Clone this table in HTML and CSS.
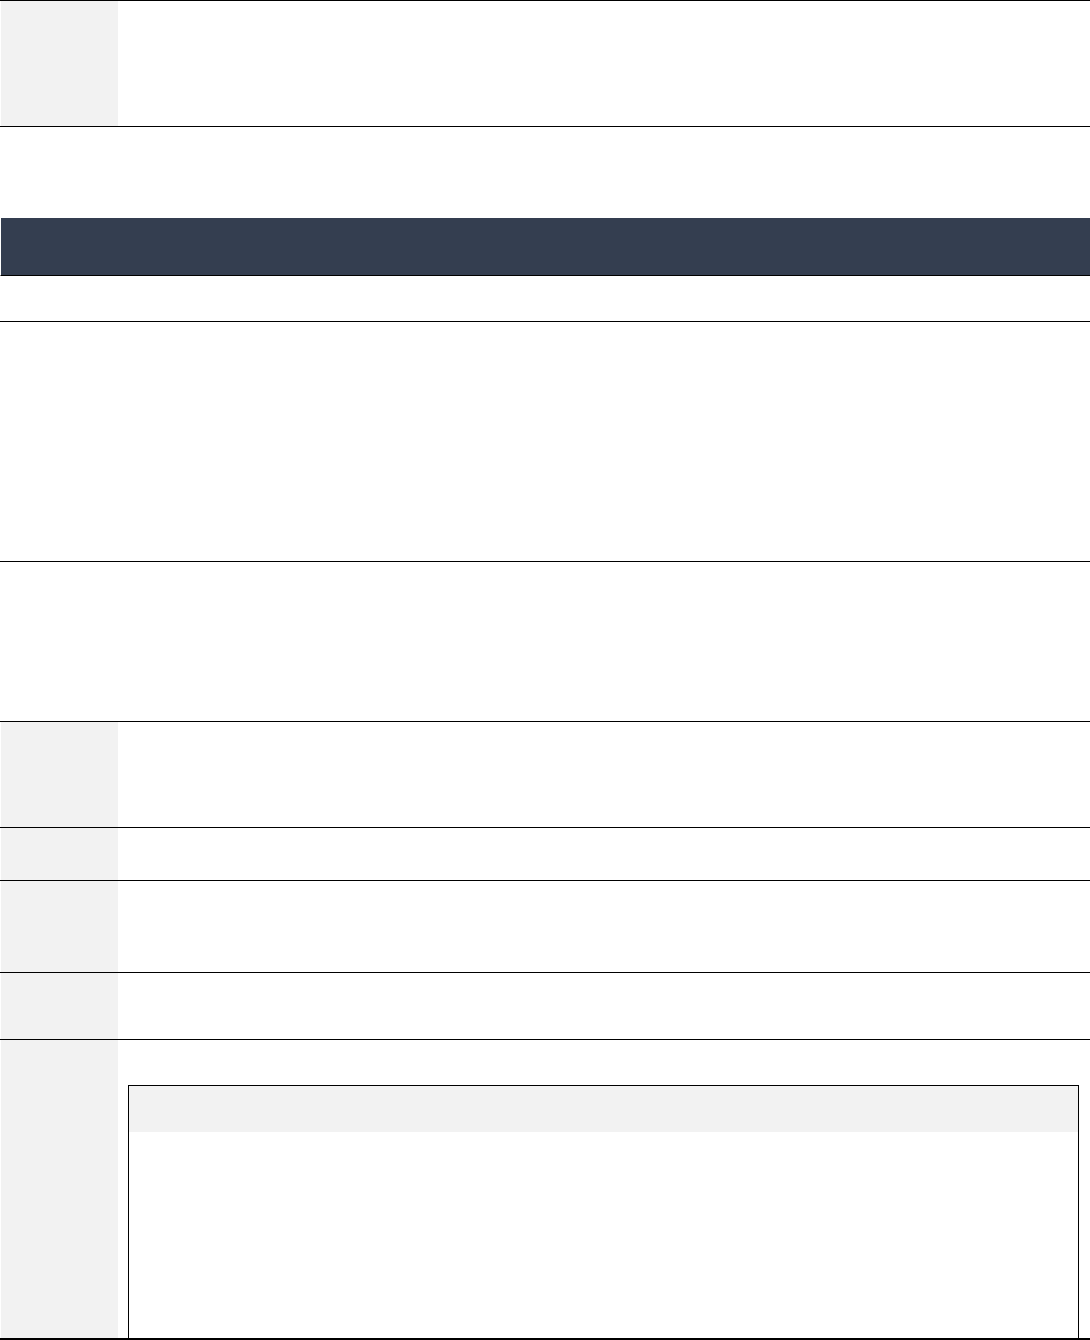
FILE: index.html
```html
<!DOCTYPE html>
<html lang="en">
<head>
<meta charset="utf-8">
<title>Record</title>
<link rel="stylesheet" href="styles.css">
</head>
<body>
<div class="page">
  <div class="row row-top">
    <div class="label"></div>
    <div class="value"></div>
  </div>

  <div class="banner"></div>
  <div class="subrow"></div>
  <div class="block"></div>

  <div class="table">
    <div class="row row-a"><div class="label"></div><div class="value"></div></div>
    <div class="row row-b"><div class="label"></div><div class="value"></div></div>
    <div class="row row-c"><div class="label"></div><div class="value"></div></div>
    <div class="row row-d"><div class="label"></div><div class="value"></div></div>
    <div class="row row-e">
      <div class="label"></div>
      <div class="value value-nested">
        <div class="panel">
          <div class="panel-head"></div>
          <div class="panel-body"></div>
        </div>
      </div>
    </div>
  </div>
</div>
</body>
</html>
```

FILE: styles.css
```css
* { box-sizing: border-box; }

html, body {
  margin: 0;
  padding: 0;
  background: #ffffff;
  font-family: "Liberation Sans", Arial, sans-serif;
}

.page {
  width: 1090px;
  display: flex;
  flex-direction: column;
}

.row {
  display: grid;
  grid-template-columns: 118px 1fr;
  border-bottom: 1px solid #000;
}

.label {
  background: #f2f2f2;
  border-left: 1px solid #fff;
}

.row-top {
  border-top: 1px solid #000;
  height: 127px;
}

.banner {
  margin-top: 91px;
  height: 58px;
  background: #343e50;
  border-left: 1px solid #fff;
  border-bottom: 1px solid #000;
}

.subrow {
  height: 46px;
  border-bottom: 1px solid #000;
}

.block {
  height: 240px;
  border-bottom: 1px solid #000;
}

.table {
  margin-top: 159px;
  border-top: 1px solid #000;
  border-bottom: 1px solid #000;
  display: flex;
  flex-direction: column;
}

.row-a { height: 106px; }
.row-b { height: 53px; }
.row-c { height: 92px; }
.row-d { height: 67px; }
.row-e { height: 299px; }

.value-nested {
  padding: 45px 11px 0 10px;
  display: flex;
}

.panel {
  flex: 1;
  border: 1px solid #000;
  border-bottom: none;
  display: flex;
  flex-direction: column;
}

.panel-head {
  height: 46px;
  background: #f2f2f2;
}

.panel-body {
  flex: 1;
}
```
